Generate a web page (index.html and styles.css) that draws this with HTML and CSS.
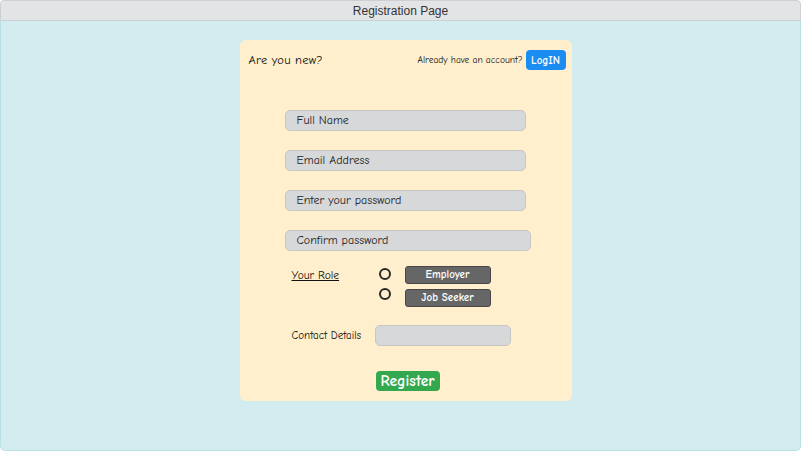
FILE: index.html
```html
<!DOCTYPE html>
<html>
<head>
<meta charset="utf-8">
<link rel="stylesheet" href="styles.css">
</head>
<body>
<div class="window">
  <div class="titlebar">Registration Page</div>
  <div class="content">
    <div class="card">
      <div class="card-head">
        <div class="new">Are you new?</div>
        <div class="login-area">
          <span class="already">Already have an account?</span>
          <span class="login">LogIN</span>
        </div>
      </div>
      <div class="fields">
        <div class="field">Full Name</div>
        <div class="field">Email Address</div>
        <div class="field">Enter your password</div>
        <div class="field wide">Confirm password</div>
      </div>
      <div class="role">
        <div class="role-label">Your Role</div>
        <div class="role-options">
          <div class="option"><span class="radio"></span><span class="opt-btn">Employer</span></div>
          <div class="option"><span class="radio"></span><span class="opt-btn">Job Seeker</span></div>
        </div>
      </div>
      <div class="contact">
        <div class="contact-label">Contact Details</div>
        <div class="contact-input"></div>
      </div>
      <div class="submit"><span class="register">Register</span></div>
    </div>
  </div>
</div>
</body>
</html>
```

FILE: styles.css
```css
* { box-sizing: border-box; }
html, body { margin: 0; padding: 0; }
body {
  width: 801px;
  height: 451px;
  overflow: hidden;
  font-family: "Comic Sans MS", "Comic Neue", "Open Sans", sans-serif;
  color: #111;
}
.window {
  width: 801px;
  height: 451px;
  display: flex;
  flex-direction: column;
}
.titlebar {
  height: 21px;
  background: #e3e4e6;
  border: 1px solid #cdd0d3;
  border-radius: 4px 4px 0 0;
  font-family: "Liberation Sans", Arial, sans-serif;
  font-size: 12px;
  color: #333;
  text-align: center;
  line-height: 20px;
}
.content {
  flex: 1;
  background: #d3ecf0;
  border: 1px solid #b6e2e7;
  border-top: none;
  border-radius: 0 0 5px 5px;
  padding-top: 19px;
  display: flex;
  justify-content: center;
}
.card {
  width: 332px;
  height: 361px;
  margin-left: 10px;
  background: #ffefcc;
  border-radius: 6px;
  padding: 10px 6px 0 9px;
  display: flex;
  flex-direction: column;
}
.card-head {
  display: flex;
  justify-content: space-between;
  align-items: flex-start;
}
.new {
  font-size: 12.5px;
  margin-top: 3px;
  letter-spacing: 0.2px;
}
.login-area {
  display: flex;
  align-items: flex-start;
}
.already {
  font-size: 9.5px;
  margin-top: 4px;
  margin-right: 3px;
}
.login {
  background: #1a8cf2;
  color: #fff;
  font-size: 11px;
  font-weight: bold;
  width: 40px;
  height: 20px;
  border-radius: 4px;
  text-align: center;
  line-height: 22px;
}
.fields {
  margin-top: 40px;
  margin-left: 36px;
  display: flex;
  flex-direction: column;
  gap: 19px;
}
.field {
  width: 241px;
  height: 21px;
  background: #d7d8da;
  border: 1px solid #c6c6c6;
  border-radius: 5px;
  font-size: 12px;
  line-height: 19px;
  padding-left: 11px;
  color: #222;
}
.field.wide { width: 246px; }
.role {
  margin-top: 15px;
  margin-left: 43px;
  display: flex;
}
.role-label {
  font-size: 11.5px;
  text-decoration: underline;
  width: 87px;
  margin-top: 3px;
}
.role-options {
  display: flex;
  flex-direction: column;
  gap: 5px;
}
.option {
  display: flex;
  align-items: center;
}
.radio {
  width: 12px;
  height: 12px;
  border: 2px solid #2a2a2a;
  border-radius: 50%;
  margin-right: 14px;
  position: relative;
  top: -1px;
}
.option + .option .radio { top: -4px; }
.opt-btn {
  width: 86px;
  height: 18px;
  background: #666666;
  border: 1px solid #484848;
  border-radius: 3px;
  color: #fff;
  font-size: 11px;
  font-weight: bold;
  text-align: center;
  line-height: 16px;
}
.contact {
  margin-top: 18px;
  margin-left: 43px;
  display: flex;
  align-items: center;
}
.contact-label {
  font-size: 11px;
  width: 83px;
}
.contact-input {
  width: 136px;
  height: 21px;
  background: #d7d8da;
  border: 1px solid #c6c6c6;
  border-radius: 5px;
}
.submit {
  margin-top: 25px;
  margin-left: 127px;
}
.register {
  display: inline-block;
  background: #34a84f;
  color: #fff;
  font-weight: bold;
  font-size: 15.5px;
  width: 64px;
  height: 20px;
  border-radius: 4px;
  text-align: center;
  line-height: 20px;
}
```
